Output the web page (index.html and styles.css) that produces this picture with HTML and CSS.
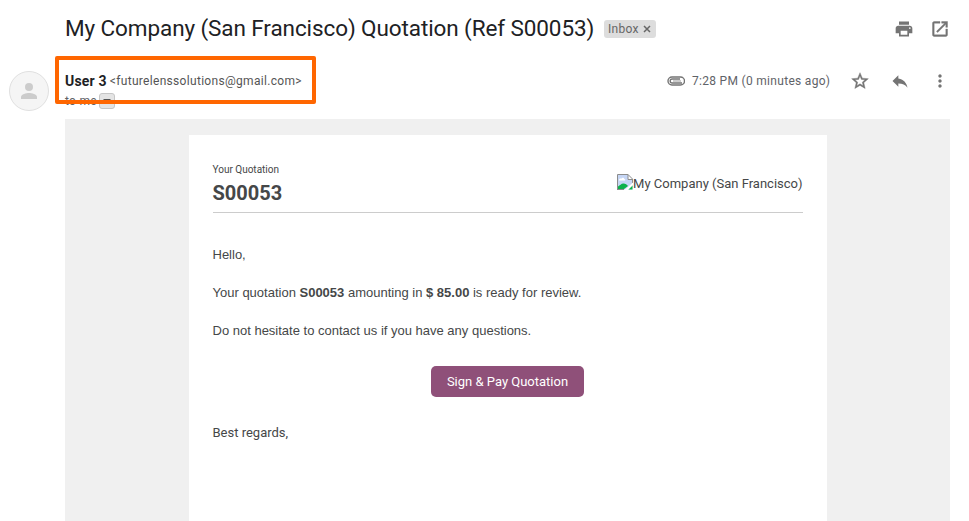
FILE: index.html
```html
<!DOCTYPE html>
<html lang="en">
<head>
<meta charset="utf-8">
<title>My Company (San Francisco) Quotation (Ref S00053)</title>
<link rel="stylesheet" href="styles.css">
</head>
<body>
<main class="message">
  <header class="subject-row">
    <h1 class="subject">My Company (San Francisco) Quotation (Ref S00053)</h1>
    <span class="label">Inbox<svg class="label-close" viewBox="0 0 8 8"><path d="M1 1l6 6M7 1L1 7"/></svg></span>
    <div class="subject-actions">
      <svg class="icon" viewBox="0 0 24 24"><path d="M19 8H5c-1.66 0-3 1.34-3 3v6h4v4h12v-4h4v-6c0-1.66-1.34-3-3-3zm-3 11H8v-5h8v5zm3-7c-.55 0-1-.45-1-1s.45-1 1-1 1 .45 1 1-.45 1-1 1zm-1-9H6v4h12V3z"/></svg>
      <svg class="icon strong" viewBox="0 0 24 24"><path d="M19 19H5V5h7V3H5c-1.11 0-2 .9-2 2v14c0 1.1.89 2 2 2h14c1.1 0 2-.9 2-2v-7h-2v7zM14 3v2h3.59l-9.83 9.83 1.41 1.41L19 6.41V10h2V3h-7z"/></svg>
    </div>
  </header>
  <section class="sender-row">
    <div class="avatar"><svg viewBox="0 0 16 16"><circle cx="8" cy="4" r="4"/><path d="M0 16v-2c0-2.7 5.3-4 8-4s8 1.300 8 4v2z"/></svg></div>
    <div class="sender">
      <div class="from"><strong class="name">User 3</strong><span class="email">&lt;futurelenssolutions@gmail.com&gt;</span></div>
      <div class="to"><span>to me</span><span class="details"><svg viewBox="0 0 8 4"><path d="M0 0h8L4 4z"/></svg></span></div>
      <div class="highlight"></div>
    </div>
    <div class="meta">
      <svg class="clip" viewBox="0 0 18 10"><path d="M15 7H5.200a2 2 0 0 1 0-4H13M5 9h8.500a4 4 0 0 0 0-8H5a4 4 0 0 0 0 8z"/><path class="clip-inner" d="M6 5h8"/></svg>
      <span class="time">7:28 PM (0 minutes ago)</span>
      <div class="meta-actions">
        <svg class="icon strong" viewBox="0 0 24 24"><path d="M22 9.240l-7.190-.62L12 2 9.190 8.630 2 9.240l5.460 4.730L5.820 21 12 17.270 18.180 21l-1.630-7.030L22 9.240zM12 15.400l-3.760 2.270 1-4.280-3.320-2.880 4.380-.38L12 6.100l1.710 4.040 4.380.38-3.320 2.880 1 4.280L12 15.400z"/></svg>
        <svg class="icon" viewBox="0 0 24 24"><path d="M10 9V5l-7 7 7 7v-4.100c5 0 8.500 1.600 11 5.100-1-5-4-10-11-11z"/></svg>
        <svg class="icon" viewBox="0 0 24 24"><path d="M12 8c1.100 0 2-.9 2-2s-.9-2-2-2-2 .9-2 2 .9 2 2 2zm0 2c-1.100 0-2 .9-2 2s.9 2 2 2 2-.9 2-2-.9-2-2-2zm0 6c-1.100 0-2 .9-2 2s.9 2 2 2 2-.9 2-2-.9-2-2-2z"/></svg>
      </div>
    </div>
  </section>
  <section class="body">
    <article class="card">
      <header class="card-head">
        <div><div class="kicker">Your Quotation</div><div class="reference">S00053</div></div>
        <div class="logo"><svg viewBox="0 0 16 16"><path fill="#c6d6f5" d="M.5.500h10.500L15.500 5v10.500H.5z"/><path fill="#fff" d="M2 6c0-1.500 1.500-2 2.300-1.300C5 3 7.200 3.500 7.300 5c1 0 1.200 1 .7 1.500H2zM11 .5V5h4.500z"/><path fill="#0bb14b" d="M1 15v-2.500c2-1 3-3 5.500-3 2 0 3.300 1 4.500 2.500L7 15zM11 15.500l4.500-4.200v4.200z"/><path fill="none" stroke="#8c8c8c" d="M16 5.500h-5V.5M.5 15.500V.5H11L15.500 5v4M0 15.500h7"/><path fill="#fff" d="M16 8.500V11l-5 5H7.500z"/></svg><span>My Company (San Francisco)</span></div>
      </header>
      <div class="content">
        <p>Hello,</p>
        <p>Your quotation <strong>S00053</strong> amounting in <strong>$ 85.00</strong> is ready for review.</p>
        <p>Do not hesitate to contact us if you have any questions.</p>
      </div>
      <div class="cta"><a class="button">Sign &amp; Pay Quotation</a></div>
      <p class="closing">Best regards,</p>
    </article>
  </section>
</main>
</body>
</html>
```
FILE: styles.css
```css
* { box-sizing: border-box; }
body { margin: 0; background: #fff; font-family: Roboto, sans-serif; color: #454748; }
p { margin: 0; }
svg { display: block; }
.message { height: 521px; display: flex; flex-direction: column; overflow: hidden; }
.subject-row { height: 58px; flex: none; display: flex; align-items: center; padding: 0 19px 0 65px; }
.subject { margin: 0 0 2px; width: 529px; font: 400 22.500px/28px Roboto, sans-serif; letter-spacing: -.1px; color: #202124; white-space: nowrap; }
.label { height: 18px; width: 52px; margin-left: 10px; padding-left: 4px; display: flex; align-items: center; gap: 5px; background: #ddd; border-radius: 3px; font-size: 12px; letter-spacing: .3px; color: #666; }
.label-close { width: 8px; height: 8px; margin-left: -1px; fill: none; stroke: #666; stroke-width: 1.500; }
.subject-actions { margin-left: auto; display: flex; gap: 16px; }
.icon { width: 20px; height: 20px; fill: #747474; }
.strong { stroke: #747474; stroke-width: .5; }
.sender-row { height: 61px; flex: none; display: flex; padding-right: 19px; }
.avatar { width: 40px; height: 40px; margin: 13px 0 0 9px; border: 1px solid #e0e0e0; border-radius: 50%; background: #f5f5f5; display: flex; align-items: center; justify-content: center; }
.avatar svg { width: 16px; height: 16px; fill: #ccc; }
.sender { position: relative; margin-left: 16px; padding-top: 13px; }
.from { height: 20px; display: flex; align-items: center; white-space: nowrap; }
.name { font-size: 14px; font-weight: 700; letter-spacing: .2px; color: #202124; }
.email { margin-left: 3px; font-size: 12px; letter-spacing: .31px; color: #555; }
.to { height: 20px; display: flex; align-items: center; gap: 2px; font-size: 12px; letter-spacing: .3px; color: #5f6368; }
.details { width: 16px; height: 16px; border: 1px solid #c6c6c6; border-radius: 3px; background: #e4e4e4; display: flex; align-items: center; justify-content: center; }
.details svg { width: 8px; height: 4px; fill: #555; }
.highlight { position: absolute; left: -10px; top: -2px; width: 261px; height: 48px; border: 4px solid #ff6600; border-radius: 2px; }
.meta { height: 20px; margin: 13px 0 0 auto; display: flex; align-items: center; }
.clip { width: 18px; height: 10px; fill: none; stroke: #747474; stroke-width: 1.400; }
.clip-inner { stroke: #999; stroke-width: 1; }
.time { margin-left: 7px; width: 138px; font-size: 12px; letter-spacing: .3px; color: #5f6368; white-space: nowrap; }
.meta-actions { margin-left: 20px; display: flex; gap: 20px; }
.body { flex: 1; margin: 0 19px 0 65px; padding: 16px 123px 0 124px; background: #f0f0f0; display: flex; }
.card { flex: 1; padding: 24px 24.500px 0 23.500px; background: #fff; font-size: 13px; }
.card-head { height: 54px; display: flex; justify-content: space-between; border-bottom: 1px solid #ccc; }
.kicker { margin-top: 4px; font-size: 10px; line-height: 14px; }
.reference { margin-top: 4px; font-size: 20px; line-height: 24px; font-weight: 700; }
.logo { height: 18px; margin-top: 15px; display: flex; align-items: center; white-space: nowrap; }
.logo svg { width: 16px; height: 16px; margin-top: -2px; }
.content { margin-top: 32px; font: 13px/20px "Liberation Sans", sans-serif; display: flex; flex-direction: column; gap: 18px; }
.cta { margin-top: 25px; display: flex; justify-content: center; }
.button { width: 153px; height: 31px; margin-right: 1px; padding-left: 1px; border-radius: 5px; background: #8f5079; color: #fff; line-height: 31px; text-align: center; white-space: nowrap; }
.closing { margin-top: 26px; line-height: 20px; }
```
